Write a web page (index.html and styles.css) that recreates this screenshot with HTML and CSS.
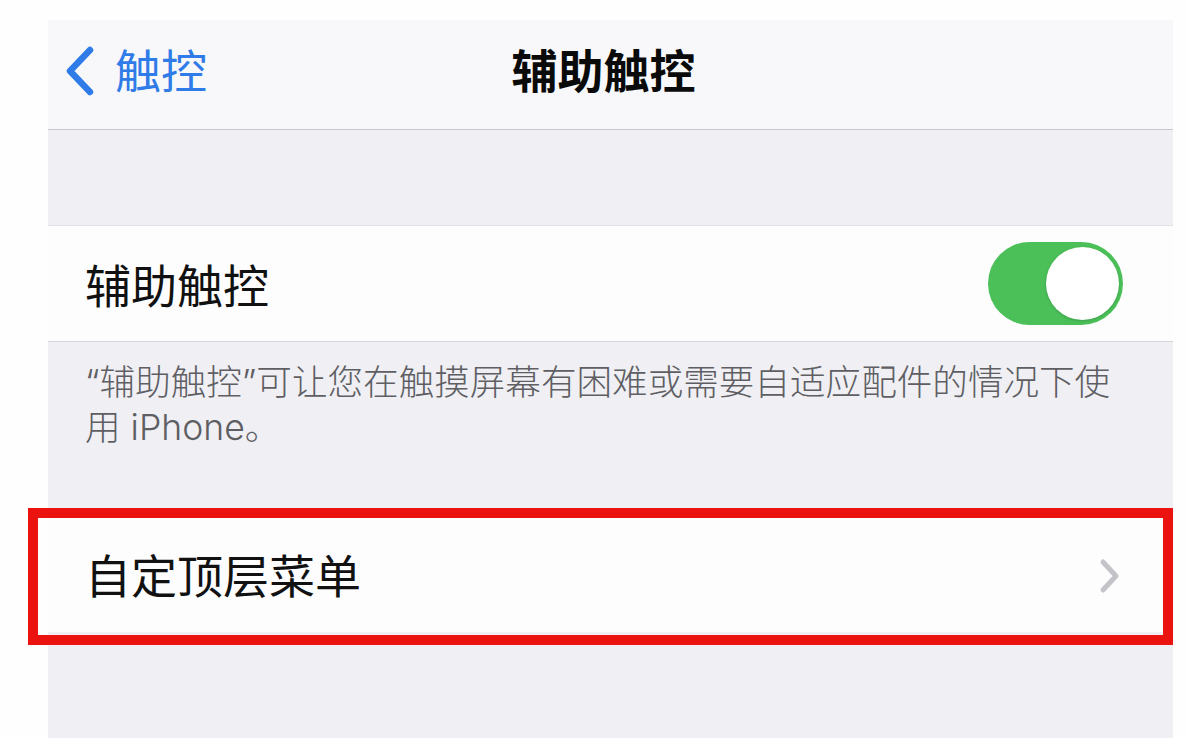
FILE: index.html
```html
<!DOCTYPE html>
<html lang="zh-CN">
<head>
<meta charset="utf-8">
<title>辅助触控</title>
<link rel="stylesheet" href="styles.css">
</head>
<body>
<div class="screen">
  <header class="nav">
    <div class="back">
      <svg class="back-chev" width="30" height="52" viewBox="0 0 30 52">
        <path d="M25 5 L5 26 L25 47" fill="none" stroke="#2f7be8" stroke-width="6.5" stroke-linecap="round" stroke-linejoin="round"/>
      </svg>
      <span class="back-text">触控</span>
    </div>
    <h1 class="title">辅助触控</h1>
    <div class="spacer"></div>
  </header>
  <div class="gap"></div>
  <div class="row row-first">
    <span class="label">辅助触控</span>
    <div class="toggle"><div class="knob"></div></div>
  </div>
  <p class="caption">“辅助触控”可让您在触摸屏幕有困难或需要自适应配件的情况下使用 iPhone。</p>
  <div class="row row-second">
    <span class="label">自定顶层菜单</span>
    <svg class="chev" width="22" height="36" viewBox="0 0 22 36">
      <path d="M4 4 L17 18 L4 32" fill="none" stroke="#c4c4c8" stroke-width="5" stroke-linecap="round" stroke-linejoin="round"/>
    </svg>
  </div>
</div>
<div class="highlight"></div>
</body>
</html>
```
FILE: styles.css
```css
html, body {
  margin: 0;
  padding: 0;
}
body {
  position: relative;
  width: 1188px;
  height: 738px;
  overflow: hidden;
  background: #fefefe;
  font-family: Inter, "Noto Sans CJK SC", sans-serif;
}
.screen {
  margin: 20px 15px 0 48px;
  width: 1125px;
  height: 718px;
  background: #efeff4;
  display: flex;
  flex-direction: column;
}
.nav {
  height: 110px;
  box-sizing: border-box;
  background: #f8f8fa;
  border-bottom: 1px solid #c6c6cb;
  display: grid;
  grid-template-columns: 1fr auto 1fr;
  align-items: center;
  padding: 0 31px 8px 17px;
}
.back {
  display: flex;
  align-items: center;
  gap: 20px;
  color: #2f7be8;
}
.back-chev {
  display: block;
}
.back-text {
  font-size: 46px;
  line-height: 56px;
}
.title {
  margin: 0;
  font-size: 46px;
  line-height: 56px;
  font-weight: 700;
  color: #0a0a0a;
}
.gap {
  height: 95px;
}
.row {
  height: 117px;
  box-sizing: border-box;
  background: #fdfdfe;
  display: flex;
  align-items: center;
  justify-content: space-between;
  padding: 4px 50px 0 37px;
}
.row-first {
  border-top: 1px solid #e2e2e6;
  border-bottom: 1px solid #d6d6da;
}
.row-second {
  padding-right: 52px;
}
.label {
  font-size: 46px;
  line-height: 56px;
  color: #111;
}
.toggle {
  width: 135px;
  height: 83px;
  border-radius: 42px;
  background: #4bc059;
  display: flex;
  justify-content: flex-end;
  align-items: center;
  padding: 0 4px;
  box-sizing: border-box;
  margin-top: -4px;
}
.knob {
  width: 73px;
  height: 73px;
  border-radius: 50%;
  background: #fff;
  box-shadow: 0 1px 3px rgba(0, 0, 0, 0.18);
}
.caption {
  margin: 0;
  height: 173px;
  box-sizing: border-box;
  padding: 18px 48px 0 37px;
  font-size: 35.6px;
  line-height: 45px;
  font-weight: 300;
  color: #5e5e63;
}
.chev {
  display: block;
}
.highlight {
  position: absolute;
  left: 28px;
  top: 508px;
  width: 1145px;
  height: 137px;
  box-sizing: border-box;
  border: 10px solid #ea130f;
}
```
